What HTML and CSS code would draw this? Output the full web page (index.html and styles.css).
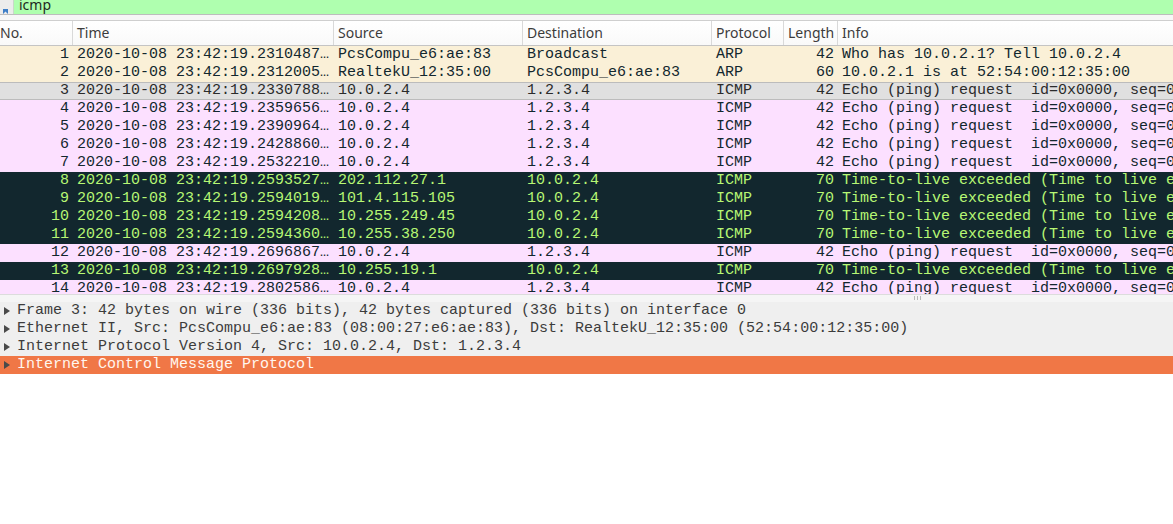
FILE: index.html
```html
<!DOCTYPE html>
<html>
<head>
<meta charset="utf-8">
<link rel="stylesheet" href="styles.css">
</head>
<body>
<div class="app">
  <div class="filterbar">
    <div class="bm"><svg width="13" height="14" viewBox="0 0 13 14"><path d="M3 9 H8 V14 L5.5 11.5 L3 14 Z" fill="#3f7fc7"/></svg></div>
    <div class="filter"><span class="ftext">icmp</span></div>
  </div>
  <div class="gap"></div>
  <div class="plist">
    <div class="row head">
      <div class="c">No.</div><div class="c">Time</div><div class="c">Source</div><div class="c">Destination</div><div class="c">Protocol</div><div class="c">Length</div><div class="c">Info</div>
    </div>
    <div class="row arp"><div class="c n">1</div><div class="c">2020-10-08 23:42:19.2310487…</div><div class="c">PcsCompu_e6:ae:83</div><div class="c">Broadcast</div><div class="c">ARP</div><div class="c n">42</div><div class="c">Who has 10.0.2.1? Tell 10.0.2.4</div></div>
    <div class="row arp"><div class="c n">2</div><div class="c">2020-10-08 23:42:19.2312005…</div><div class="c">RealtekU_12:35:00</div><div class="c">PcsCompu_e6:ae:83</div><div class="c">ARP</div><div class="c n">60</div><div class="c">10.0.2.1 is at 52:54:00:12:35:00</div></div>
    <div class="row sel"><div class="c n">3</div><div class="c">2020-10-08 23:42:19.2330788…</div><div class="c">10.0.2.4</div><div class="c">1.2.3.4</div><div class="c">ICMP</div><div class="c n">42</div><div class="c">Echo (ping) request  id=0x0000, seq=0/0, ttl=1 (no response found!)</div></div>
    <div class="row icmp"><div class="c n">4</div><div class="c">2020-10-08 23:42:19.2359656…</div><div class="c">10.0.2.4</div><div class="c">1.2.3.4</div><div class="c">ICMP</div><div class="c n">42</div><div class="c">Echo (ping) request  id=0x0000, seq=0/0, ttl=2 (no response found!)</div></div>
    <div class="row icmp"><div class="c n">5</div><div class="c">2020-10-08 23:42:19.2390964…</div><div class="c">10.0.2.4</div><div class="c">1.2.3.4</div><div class="c">ICMP</div><div class="c n">42</div><div class="c">Echo (ping) request  id=0x0000, seq=0/0, ttl=3 (no response found!)</div></div>
    <div class="row icmp"><div class="c n">6</div><div class="c">2020-10-08 23:42:19.2428860…</div><div class="c">10.0.2.4</div><div class="c">1.2.3.4</div><div class="c">ICMP</div><div class="c n">42</div><div class="c">Echo (ping) request  id=0x0000, seq=0/0, ttl=4 (no response found!)</div></div>
    <div class="row icmp"><div class="c n">7</div><div class="c">2020-10-08 23:42:19.2532210…</div><div class="c">10.0.2.4</div><div class="c">1.2.3.4</div><div class="c">ICMP</div><div class="c n">42</div><div class="c">Echo (ping) request  id=0x0000, seq=0/0, ttl=5 (no response found!)</div></div>
    <div class="row err"><div class="c n">8</div><div class="c">2020-10-08 23:42:19.2593527…</div><div class="c">202.112.27.1</div><div class="c">10.0.2.4</div><div class="c">ICMP</div><div class="c n">70</div><div class="c">Time-to-live exceeded (Time to live exceeded in transit)</div></div>
    <div class="row err"><div class="c n">9</div><div class="c">2020-10-08 23:42:19.2594019…</div><div class="c">101.4.115.105</div><div class="c">10.0.2.4</div><div class="c">ICMP</div><div class="c n">70</div><div class="c">Time-to-live exceeded (Time to live exceeded in transit)</div></div>
    <div class="row err"><div class="c n">10</div><div class="c">2020-10-08 23:42:19.2594208…</div><div class="c">10.255.249.45</div><div class="c">10.0.2.4</div><div class="c">ICMP</div><div class="c n">70</div><div class="c">Time-to-live exceeded (Time to live exceeded in transit)</div></div>
    <div class="row err"><div class="c n">11</div><div class="c">2020-10-08 23:42:19.2594360…</div><div class="c">10.255.38.250</div><div class="c">10.0.2.4</div><div class="c">ICMP</div><div class="c n">70</div><div class="c">Time-to-live exceeded (Time to live exceeded in transit)</div></div>
    <div class="row icmp"><div class="c n">12</div><div class="c">2020-10-08 23:42:19.2696867…</div><div class="c">10.0.2.4</div><div class="c">1.2.3.4</div><div class="c">ICMP</div><div class="c n">42</div><div class="c">Echo (ping) request  id=0x0000, seq=0/0, ttl=6 (no response found!)</div></div>
    <div class="row err"><div class="c n">13</div><div class="c">2020-10-08 23:42:19.2697928…</div><div class="c">10.255.19.1</div><div class="c">10.0.2.4</div><div class="c">ICMP</div><div class="c n">70</div><div class="c">Time-to-live exceeded (Time to live exceeded in transit)</div></div>
    <div class="row icmp"><div class="c n">14</div><div class="c">2020-10-08 23:42:19.2802586…</div><div class="c">10.0.2.4</div><div class="c">1.2.3.4</div><div class="c">ICMP</div><div class="c n">42</div><div class="c">Echo (ping) request  id=0x0000, seq=0/0, ttl=7 (no response found!)</div></div>
  </div>
  <div class="splitter"><span class="grip"></span></div>
  <div class="details">
    <div class="node"><span class="tri"></span>Frame 3: 42 bytes on wire (336 bits), 42 bytes captured (336 bits) on interface 0</div>
    <div class="node"><span class="tri"></span>Ethernet II, Src: PcsCompu_e6:ae:83 (08:00:27:e6:ae:83), Dst: RealtekU_12:35:00 (52:54:00:12:35:00)</div>
    <div class="node"><span class="tri"></span>Internet Protocol Version 4, Src: 10.0.2.4, Dst: 1.2.3.4</div>
    <div class="node active"><span class="tri"></span>Internet Control Message Protocol</div>
  </div>
</div>
</body>
</html>
```
FILE: styles.css
```css
html, body {
  margin: 0;
  padding: 0;
  background: #ffffff;
}
body {
  width: 1173px;
  height: 524px;
  overflow: hidden;
}
.app {
  width: 1173px;
  display: flex;
  flex-direction: column;
}
.filterbar {
  display: flex;
  height: 14px;
  border-bottom: 1px solid #bdbdbd;
  overflow: hidden;
}
.bm {
  width: 13px;
  height: 14px;
  background: #ececec;
  flex: none;
}
.bm svg {
  display: block;
}
.filter {
  flex: 1;
  background: #afffaf;
  border-left: 1px solid #c9d9c9;
  padding-left: 5px;
  display: flex;
  align-items: flex-start;
}
.ftext {
  font-family: "Noto Sans", sans-serif;
  font-size: 14px;
  line-height: 12px;
  margin-top: -1px;
  color: #1e2a1e;
}
.gap {
  height: 5px;
  background: #f7f7f7;
}
.plist {
  height: 274px;
  overflow: hidden;
  font-family: "Liberation Mono", monospace;
  font-size: 15px;
}
.row {
  display: grid;
  grid-template-columns: 72px 261px 189px 189px 72px 54px 1fr;
  height: 18px;
  line-height: 18px;
  color: #12272e;
}
.c {
  padding-left: 5px;
  white-space: pre;
  overflow: hidden;
}
.c.n {
  padding-left: 0;
  padding-right: 3px;
  text-align: right;
}
.head {
  height: 24px;
  line-height: 24px;
  border-top: 1px solid #cfcfcf;
  border-bottom: 1px solid #c4c4c4;
  background: linear-gradient(#ffffff, #f9f9f9);
  font-family: "Noto Sans", sans-serif;
  font-size: 14px;
  color: #3c3c3c;
}
.head .c {
  padding-left: 4px;
  border-left: 1px solid #d9d9d9;
}
.head .c:first-child {
  padding-left: 0;
  border-left: none;
}
.arp {
  background: #faf0d7;
}
.icmp {
  background: #fce0ff;
}
.err {
  background: #12272e;
  color: #b7f774;
}
.sel {
  background: #e0e0e0;
  color: #2b2b2b;
  box-shadow: inset 0 1px #bcbcbc, inset 0 -1px #bcbcbc;
}
.splitter {
  height: 8px;
  background: #f5f5f5;
  border-top: 1px solid #dcdcdc;
  box-sizing: border-box;
  display: flex;
  justify-content: flex-start;
  padding-left: 914px;
}
.grip {
  width: 8px;
  height: 4px;
  margin-top: 1px;
  background: repeating-linear-gradient(90deg, #b8b8b8 0 1px, transparent 1px 3px);
}
.details {
  font-family: "Liberation Mono", monospace;
  font-size: 15px;
  color: #3c3c3c;
}
.node {
  height: 18px;
  line-height: 18px;
  background: #efefef;
  white-space: pre;
  display: flex;
  align-items: center;
}
.node.active {
  background: #f07746;
  color: #fff6ef;
}
.tri {
  width: 0;
  height: 0;
  margin-left: 4px;
  margin-right: 7px;
  border-left: 6px solid #4a4a4a;
  border-top: 4px solid transparent;
  border-bottom: 4px solid transparent;
  flex: none;
}
```
